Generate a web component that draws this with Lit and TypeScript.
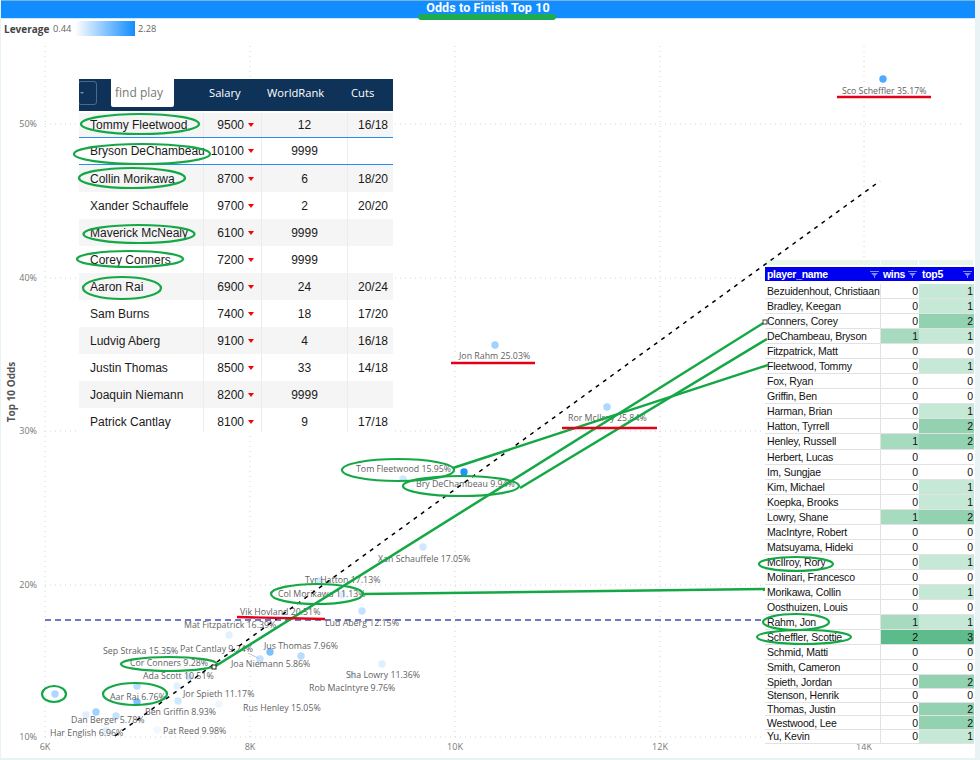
import { LitElement, html, css, svg } from "lit";
import { customElement } from "lit/decorators.js";

const points: [number, number, number][] = [
  [883, 79, 0.75], [495, 345, 0.4], [607, 407, 0.35], [464, 472, 0.95], [403, 479, 0.2],
  [423, 547, 0.2], [320, 581, 0.2], [342, 595, 0.15], [362, 611, 0.25], [382, 664, 0.15],
  [352, 675, 0.12], [229, 635, 0.12], [270, 652, 0.55], [260, 659, 0.25], [301, 656, 0.3],
  [170, 651, 0.1], [189, 677, 0.2], [177, 686, 0.12], [137, 686, 0.3], [137, 702, 0.55],
  [178, 701, 0.2], [219, 704, 0.08], [157, 730, 0.06], [55, 694, 0.35], [86, 715, 0.15],
  [96, 712, 0.4], [116, 716, 0.25], [106, 731, 0.15],
];

const labels: [string, number, number][] = [
  ["Sco Scheffler 35.17%", 842, 91], ["Jon Rahm 25.03%", 459, 356], ["Ror McIlroy 25.84%", 568, 418],
  ["Tom Fleetwood 15.95%", 356, 469], ["Bry DeChambeau 9.94%", 416, 484], ["Xan Schauffele 17.05%", 378, 559],
  ["Tyr Hatton 17.13%", 305, 580], ["Col Morikawa 11.13%", 278, 594], ["Vik Hovland 20.51%", 240, 612],
  ["Lud Aberg 12.15%", 325, 623], ["Mat Fitzpatrick 16.39%", 184, 625], ["Jus Thomas 7.96%", 264, 646],
  ["Pat Cantlay 9.24%", 180, 649], ["Sep Straka 15.35%", 103, 651], ["Cor Conners 9.28%", 130, 663],
  ["Joa Niemann 5.86%", 231, 664], ["Ada Scott 10.51%", 143, 676], ["Sha Lowry 11.36%", 346, 675],
  ["Rob MacIntyre 9.76%", 309, 688], ["Aar Rai 6.76%", 110, 697], ["Jor Spieth 11.17%", 183, 694],
  ["Rus Henley 15.05%", 243, 708], ["Ben Griffin 8.93%", 145, 712], ["Dan Berger 5.78%", 71, 720],
  ["Pat Reed 9.98%", 163, 731], ["Har English 6.96%", 50, 733],
];

const ellipses: [number, number, number, number][] = [
  [140, 124, 59, 10], [142, 154, 68, 10], [132, 178, 53, 10], [139, 234, 55.5, 9],
  [130, 259, 53, 8], [122, 288, 39, 11], [398, 470, 56, 11], [461, 486, 58, 10],
  [317, 594, 46, 10], [169, 664, 48, 7], [135, 694, 32, 11], [54, 694, 12, 8],
  [796, 564, 37, 7], [796, 622, 33, 8], [804, 637, 47, 7],
];

const greenLines: [number, number, number, number][] = [
  [214, 667, 765, 322], [520, 488, 767, 339], [453, 468, 768, 365], [363, 594, 765, 589],
];

const redLines: [number, number, number, number][] = [
  [837, 97, 931, 97], [451, 363, 535, 363], [562, 428, 657, 428], [237, 617, 325, 619],
];

const leftRows: [string, string, string, string][] = [
  ["Tommy Fleetwood", "9500", "12", "16/18"], ["Bryson DeChambeau", "10100", "9999", ""],
  ["Collin Morikawa", "8700", "6", "18/20"], ["Xander Schauffele", "9700", "2", "20/20"],
  ["Maverick McNealy", "6100", "9999", ""], ["Corey Conners", "7200", "9999", ""],
  ["Aaron Rai", "6900", "24", "20/24"], ["Sam Burns", "7400", "18", "17/20"],
  ["Ludvig Aberg", "9100", "4", "16/18"], ["Justin Thomas", "8500", "33", "14/18"],
  ["Joaquin Niemann", "8200", "9999", ""], ["Patrick Cantlay", "8100", "9", "17/18"],
];

const rightRows: [string, number, number][] = [
  ["Bezuidenhout, Christiaan", 0, 1], ["Bradley, Keegan", 0, 1], ["Conners, Corey", 0, 2],
  ["DeChambeau, Bryson", 1, 1], ["Fitzpatrick, Matt", 0, 0], ["Fleetwood, Tommy", 0, 1],
  ["Fox, Ryan", 0, 0], ["Griffin, Ben", 0, 0], ["Harman, Brian", 0, 1], ["Hatton, Tyrrell", 0, 2],
  ["Henley, Russell", 1, 2], ["Herbert, Lucas", 0, 0], ["Im, Sungjae", 0, 0], ["Kim, Michael", 0, 1],
  ["Koepka, Brooks", 0, 1], ["Lowry, Shane", 1, 2], ["MacIntyre, Robert", 0, 0], ["Matsuyama, Hideki", 0, 0],
  ["McIlroy, Rory", 0, 1], ["Molinari, Francesco", 0, 0], ["Morikawa, Collin", 0, 1], ["Oosthuizen, Louis", 0, 0],
  ["Rahm, Jon", 1, 1], ["Scheffler, Scottie", 2, 3], ["Schmid, Matti", 0, 0], ["Smith, Cameron", 0, 0],
  ["Spieth, Jordan", 0, 2], ["Stenson, Henrik", 0, 0], ["Thomas, Justin", 0, 2], ["Westwood, Lee", 0, 2],
  ["Yu, Kevin", 0, 1],
];

const xTicks: [number, string][] = [[45, "6K"], [250, "8K"], [455, "10K"], [660, "12K"], [864, "14K"]];
const yTicks: [number, string][] = [[124, "50%"], [278, "40%"], [431, "30%"], [585, "20%"], [737, "10%"]];

@customElement("app-root")
export class AppRoot extends LitElement {
  static styles = css`
    :host { display: block; width: 980px; height: 760px; font-family: "Liberation Sans", Arial, sans-serif; }
    .stage { position: relative; width: 980px; height: 760px; background: #e9f3f5; overflow: hidden; }
    .panel { width: 974px; height: 758px; margin-left: 1px; background: #fff; display: flex; flex-direction: column; }
    .title {
      height: 13px; padding-bottom: 4px; background: #118dff; border-top: 1px solid #7fb2e0; border-bottom: 1px solid #cfe6fb;
      display: flex; justify-content: center; align-items: center;
      color: #fff; font: 700 12.5px Roboto, sans-serif; letter-spacing: .1px;
    }
    .legend { display: flex; align-items: center; height: 15px; margin-top: 2px; padding-left: 3px; font: 9.3px "Open Sans", sans-serif; color: #666; }
    .legend b { color: #444; width: 49px; font-weight: 700; font-size: 10px; }
    .legend .min { width: 22px; }
    .legend .ramp { width: 60px; height: 15px; background: linear-gradient(90deg, #fff, #118dff); margin-right: 3px; }
    .chart, .marks { position: absolute; left: 0; top: 0; }
    .chart text { font-family: "Open Sans", sans-serif; }
    .lbl { font-size: 8.8px; fill: #5f5f5f; }
    .tick { font-size: 9px; fill: #777; }
    .axis { font-size: 10px; font-weight: 700; fill: #555; }

    .leaderboard { position: absolute; left: 79px; top: 79px; width: 314px; height: 353px; overflow: hidden; background: #fff; font-size: 12px; color: #1a1a1a; }
    .lhead { display: grid; grid-template-columns: 125px 58px 86px 45px; height: 32px; background: #0f3358; color: #fff; font: 11.2px "Open Sans", sans-serif; align-items: center; }
    .lhead > div { padding-bottom: 5px; }
    .lhead .tools { display: flex; height: 32px; padding-bottom: 0; }
    .filterbtn { width: 19px; height: 24px; margin: 2px 0 0 -1px; border: 1px solid #4c6b8c; border-radius: 3px; box-sizing: border-box; flex: none; position: relative; }
    .filterbtn::before { content: ""; position: absolute; left: 1px; top: 10px; border: 2px solid transparent; border-top: 2px solid #7f93a8; }
    .search { margin-left: 14px; width: 63px; height: 28px; background: #fff; border-radius: 0 0 2px 2px; color: #777; font-size: 12px; line-height: 28px; padding-left: 4px; box-sizing: border-box; }
    .lhead .sal { padding-left: 5px; }
    .lhead .wr { padding-left: 5px; }
    .lhead .cuts { padding-left: 3px; }
    .lrow { display: grid; grid-template-columns: 125px 58px 86px 45px; height: 27px; box-sizing: border-box; align-items: stretch; }
    .lrow.alt { background: #f5f5f5; }
    .lrow.first { border-top: 2px solid #fff; border-bottom: 1px solid #2a8cf0; }
    .lrow.second { border-bottom: 1px solid #2a8cf0; }
    .lrow > div { display: flex; align-items: center; border-right: 1px solid #ececec; box-sizing: border-box; white-space: nowrap; overflow: hidden; }
    .lrow > div:last-child { border-right: 0; }
    .lrow .name { padding-left: 11px; overflow: visible; }
    .lrow .salv { justify-content: flex-end; padding-right: 7px; gap: 4px; }
    .tri { width: 0; height: 0; border-left: 3.5px solid transparent; border-right: 3.5px solid transparent; border-top: 4px solid #f00; }
    .lrow .wrv { justify-content: center; }
    .lrow .cutv { justify-content: flex-end; padding-right: 5px; }

    .matrix { position: absolute; left: 765px; top: 260px; width: 209px; background: #fff; font-size: 10.5px; letter-spacing: -.2px; color: #111; }
    .stub { display: grid; grid-template-columns: 116px 38px 55px; height: 5px; margin-bottom: 2px; }
    .stub div { background: #e8f5ed; border-right: 1px solid #fff; }
    .mhead { display: grid; grid-template-columns: 116px 38px 55px; height: 14px; background: #0000f0; color: #fff; font-weight: 700; font-size: 10.5px; letter-spacing: -.3px; align-items: center; margin-bottom: 3px; }
    .mhead > div { display: flex; align-items: center; justify-content: space-between; padding-left: 2px; padding-right: 2px; box-sizing: border-box; white-space: nowrap; }
    .mhead > div:last-child { padding-left: 3px; }
    .mhead svg { flex: none; }
    .mrow { display: grid; grid-template-columns: 116px 38px 55px; height: 15.05px; box-sizing: border-box; border-bottom: 1px solid #e2e2e2; }
    .mrow.tight { height: 13.7px; }
    .mrow > div { display: flex; align-items: center; white-space: nowrap; box-sizing: border-box; }
    .mrow .n { padding-left: 2px; border-right: 1px solid #e2e2e2; }
    .mrow .v { justify-content: flex-end; padding-right: 1px; }
    .c0 { background: #fff; } .w1 { background: #a7dbc0; } .w2 { background: #5cbb8a; }
    .t1 { background: #c6e8d7; } .t2 { background: #92d2b1; } .t3 { background: #5ebc8c; }
  `;

  private funnel() {
    return html`<svg width="9" height="7" viewBox="0 0 9 7"><path d="M0 0H9V1H0ZM1 2H8L5 5V7H4V5Z" fill="#7d8cf0"/></svg>`;
  }

  private chart() {
    return html`<svg class="chart" width="980" height="760" viewBox="0 0 980 760">
      ${xTicks.map(([x]) => svg`<line x1=${x} x2=${x} y1="46" y2="737" stroke="#d4d4d4" stroke-dasharray="1 4"/>`)}
      ${yTicks.map(([y]) => svg`<line x1="45" x2="965" y1=${y} y2=${y} stroke="#d4d4d4" stroke-dasharray="1 4"/>`)}
      ${xTicks.map(([x, t]) => svg`<text class="tick" x=${x} y="750" text-anchor="middle">${t}</text>`)}
      ${yTicks.map(([y, t]) => svg`<text class="tick" x="37" y=${y + 3} text-anchor="end">${t}</text>`)}
      <text class="axis" transform="translate(14.5 392) rotate(-90)" text-anchor="middle">Top 10 Odds</text>
      <line x1="45" x2="765" y1="620" y2="620" stroke="#7078c8" stroke-width="2" stroke-dasharray="6 4"/>
      ${points.map(([x, y, o]) => svg`<circle cx=${x} cy=${y} r="3.7" fill="#118dff" fill-opacity=${o}/>`)}
      <line x1="248" y1="653" x2="258" y2="658" stroke="#aaa" stroke-width=".7"/>
      <line x1="176" y1="655" x2="180" y2="659" stroke="#ccc" stroke-width=".7"/>
      ${labels.map(([t, x, y]) => svg`<text class="lbl" x=${x} y=${y + 3}>${t}</text>`)}
    </svg>`;
  }

  private marks() {
    return html`<svg class="marks" width="980" height="760" viewBox="0 0 980 760">
      <rect x="418" y="14" width="138" height="6" rx="3" fill="#1fab4f"/>
      <line x1="115" y1="736" x2="880" y2="181" stroke="#000" stroke-width="1.5" stroke-dasharray="4 5"/>
      ${greenLines.map(([a, b, c, d]) => svg`<line x1=${a} y1=${b} x2=${c} y2=${d} stroke="#13a845" stroke-width="2.5"/>`)}
      ${ellipses.map(([cx, cy, rx, ry]) => svg`<ellipse cx=${cx} cy=${cy} rx=${rx} ry=${ry} fill="none" stroke="#13a845" stroke-width="2.2"/>`)}
      ${redLines.map(([a, b, c, d]) => svg`<line x1=${a} y1=${b} x2=${c} y2=${d} stroke="#e2001a" stroke-width="2.4"/>`)}
      <rect x="212" y="665" width="4" height="4" fill="#fff" stroke="#222"/>
      <rect x="763" y="320" width="4" height="4" fill="#fff" stroke="#444"/>
    </svg>`;
  }

  private leaderboard() {
    return html`<div class="leaderboard">
      <div class="lhead">
        <div class="tools"><div class="filterbtn"></div><div class="search">find play</div></div>
        <div class="sal">Salary</div><div class="wr">WorldRank</div><div class="cuts">Cuts</div>
      </div>
      ${leftRows.map((r, i) => html`<div class="lrow ${i % 2 === 0 ? "alt" : ""} ${i === 0 ? "first" : ""} ${i === 1 ? "second" : ""}">
        <div class="name">${r[0]}</div>
        <div class="salv">${r[1]}<span class="tri"></span></div>
        <div class="wrv">${r[2]}</div>
        <div class="cutv">${r[3]}</div>
      </div>`)}
    </div>`;
  }

  private matrix() {
    return html`<div class="matrix">
      <div class="stub"><div></div><div></div><div></div></div>
      <div class="mhead">
        <div>player_name${this.funnel()}</div>
        <div>wins${this.funnel()}</div>
        <div>top5${this.funnel()}</div>
      </div>
      ${rightRows.map((r, i) => html`<div class="mrow ${i >= 26 ? "tight" : ""}">
        <div class="n">${r[0]}</div>
        <div class="v ${r[1] ? "w" + r[1] : "c0"}">${r[1]}</div>
        <div class="v ${r[2] ? "t" + r[2] : "c0"}">${r[2]}</div>
      </div>`)}
    </div>`;
  }

  render() {
    return html`<div class="stage">
      <div class="panel">
        <div class="title">Odds to Finish Top 10</div>
        <div class="legend"><b>Leverage</b><span class="min">0.44</span><span class="ramp"></span><span>2.28</span></div>
      </div>
      ${this.chart()}
      ${this.leaderboard()}
      ${this.matrix()}
      ${this.marks()}
    </div>`;
  }
}
